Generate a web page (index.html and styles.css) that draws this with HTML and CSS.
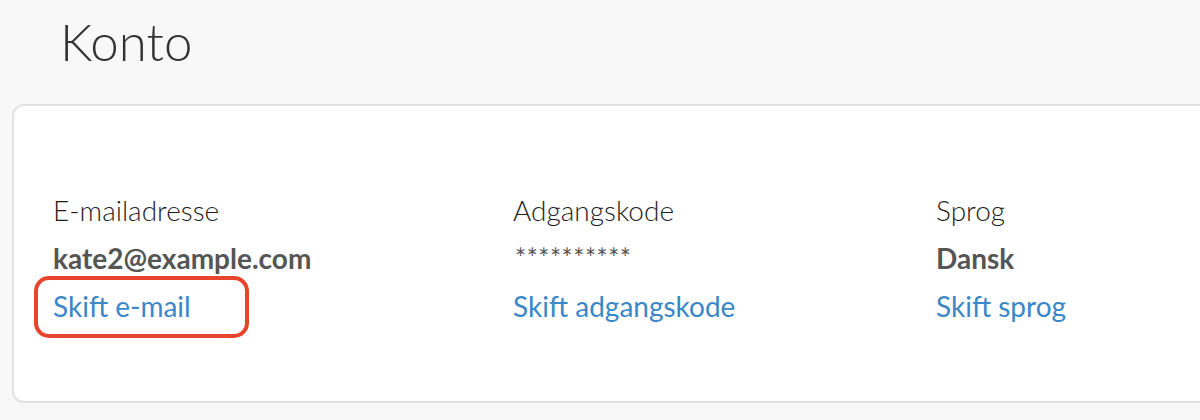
FILE: index.html
```html
<!DOCTYPE html>
<html lang="da">
<head>
<meta charset="utf-8">
<title>Konto</title>
<link rel="stylesheet" href="styles.css">
</head>
<body>
<h1 class="page-title">Konto</h1>
<section class="card">
  <div class="col col-email">
    <div class="label">E-mailadresse</div>
    <div class="value">kate2@example.com</div>
    <div class="link-wrap">
      <a class="link" href="#">Skift e-mail</a>
      <span class="highlight"></span>
    </div>
  </div>
  <div class="col col-pass">
    <div class="label">Adgangskode</div>
    <div class="value stars">**********</div>
    <div class="link-wrap">
      <a class="link" href="#">Skift adgangskode</a>
    </div>
  </div>
  <div class="col col-lang">
    <div class="label">Sprog</div>
    <div class="value">Dansk</div>
    <div class="link-wrap">
      <a class="link" href="#">Skift sprog</a>
    </div>
  </div>
</section>
</body>
</html>
```
FILE: styles.css
```css
html, body {
  margin: 0;
  padding: 0;
  overflow: hidden;
}
body {
  background: #f8f8f8;
  font-family: Lato, "Open Sans", sans-serif;
  color: #222;
  width: 1200px;
  height: 420px;
}
.page-title {
  margin: 0;
  padding: 12px 0 0 60px;
  height: 104px;
  box-sizing: border-box;
  font-size: 51px;
  font-weight: 300;
  line-height: 60px;
  color: #333;
}
.card {
  margin-left: 12px;
  width: 1240px;
  height: 299px;
  box-sizing: border-box;
  background: #fff;
  border: 2px solid #e2e2e2;
  border-radius: 12px;
  padding: 80px 0 0 39px;
  display: flex;
}
.col-email { width: 460px; }
.col-pass { width: 423px; }
.col-lang { width: 300px; }
.label, .value, .link-wrap {
  font-size: 28px;
  line-height: 48px;
  white-space: nowrap;
}
.label {
  font-weight: 300;
  color: #1e1e1e;
}
.value {
  font-weight: 700;
  color: #555;
}
.stars {
  font-weight: 400;
  font-size: 26px;
  letter-spacing: 0.6px;
  padding-left: 2px;
}
.link-wrap {
  position: relative;
}
.link {
  color: #3b87c7;
  text-decoration: none;
  font-weight: 400;
}
.highlight {
  position: absolute;
  left: -19px;
  top: -6px;
  width: 215px;
  height: 62px;
  box-sizing: border-box;
  border: 4px solid #e8432b;
  border-radius: 15px;
}
```
